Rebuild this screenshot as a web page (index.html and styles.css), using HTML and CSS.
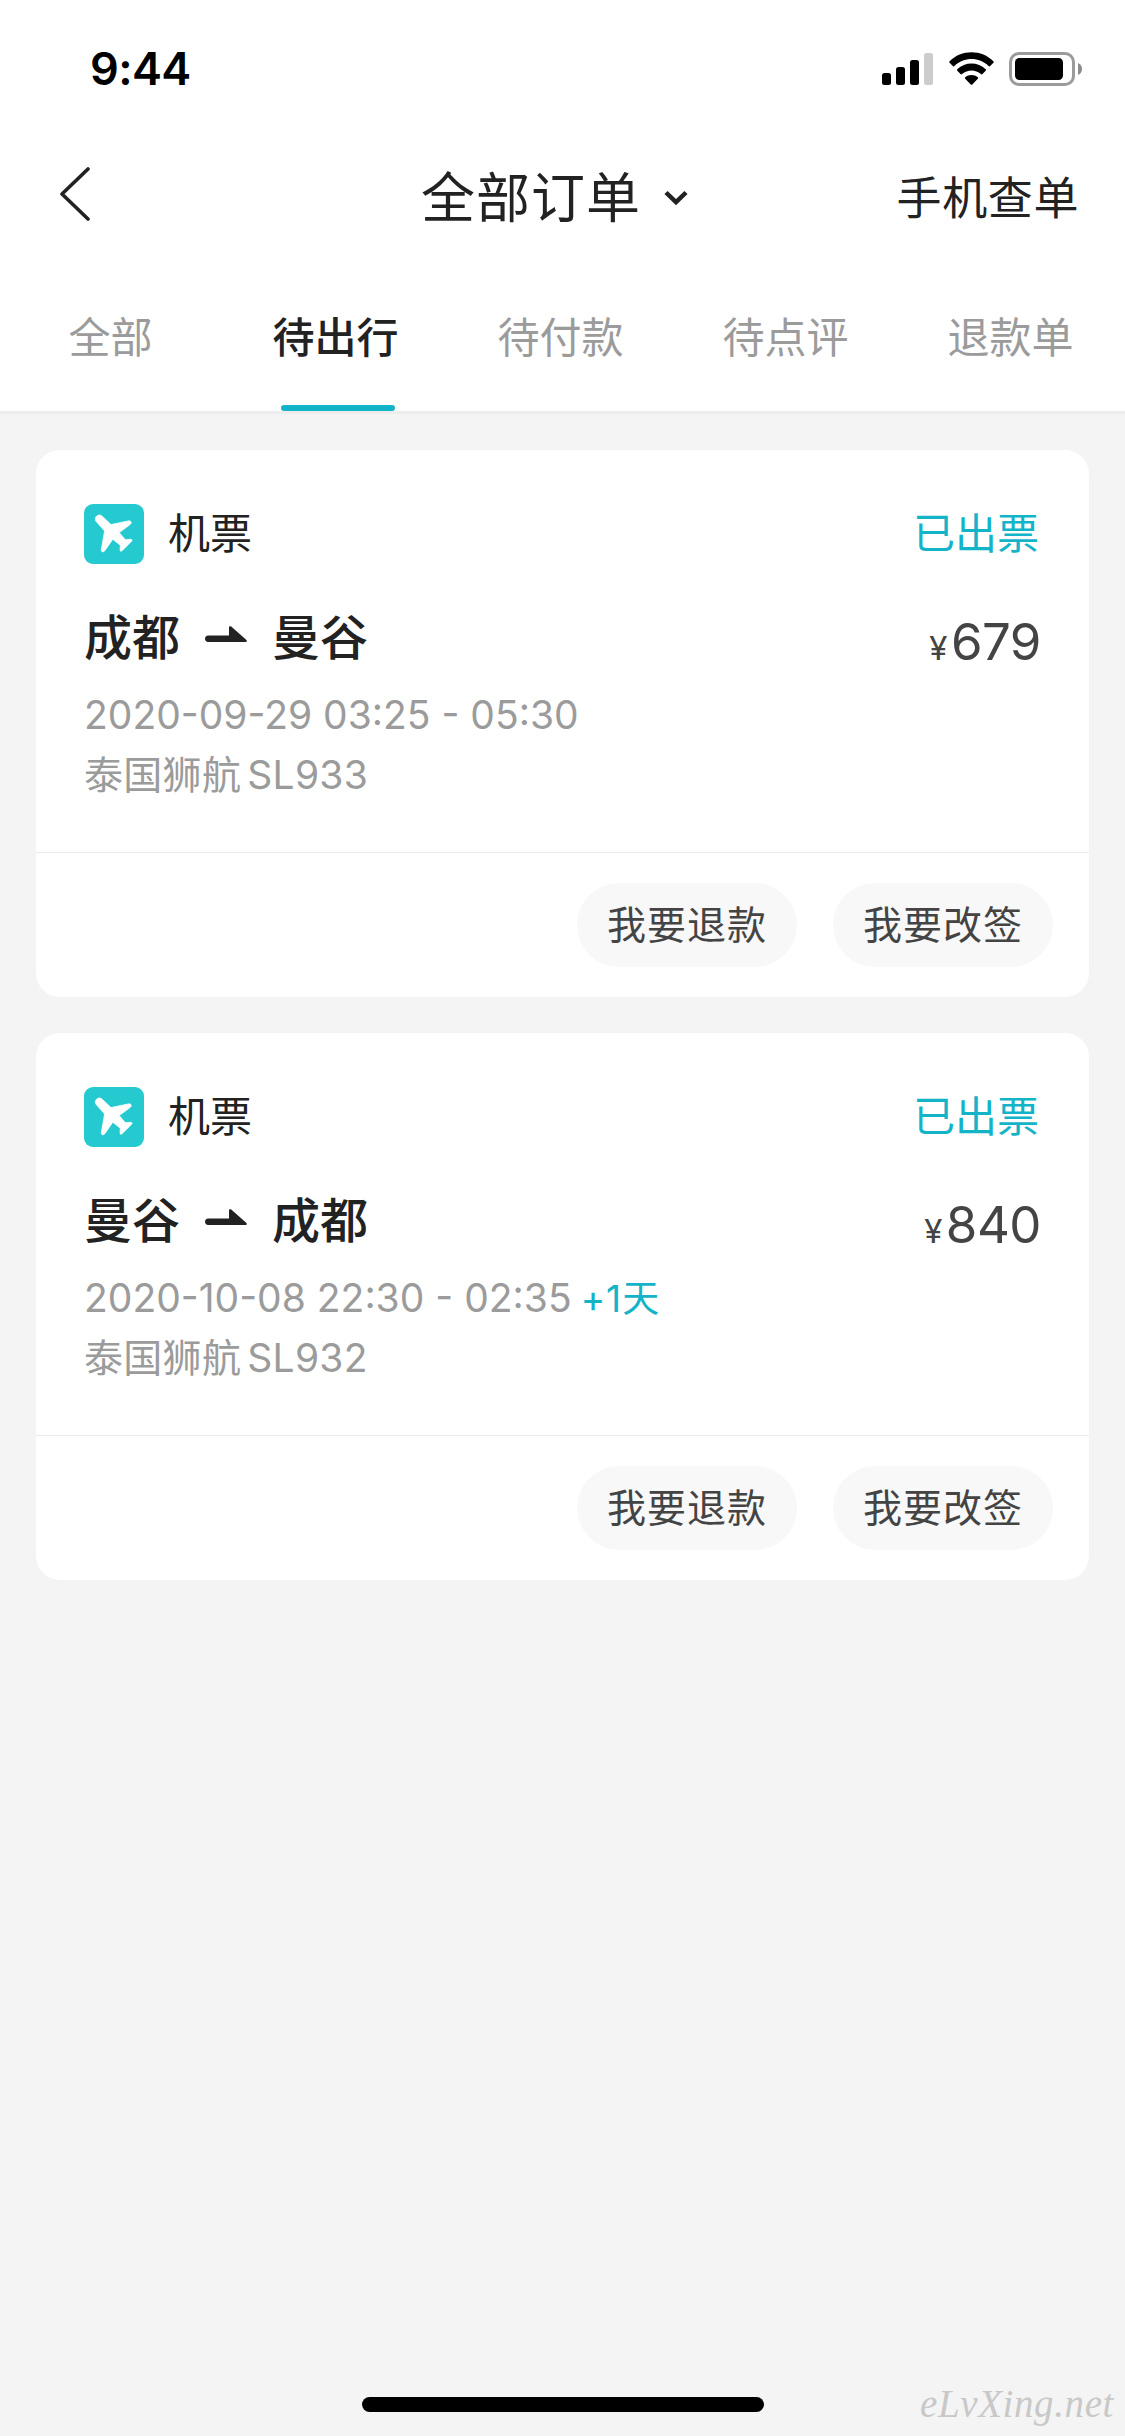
FILE: index.html
```html
<!DOCTYPE html>
<html lang="zh-CN">
<head>
<meta charset="utf-8">
<title>全部订单</title>
<link rel="stylesheet" href="styles.css">
</head>
<body>
<svg class="sprite" aria-hidden="true">
  <symbol id="plane" viewBox="0 0 60 60">
    <rect width="60" height="60" rx="9" fill="#25cad1"/>
    <path fill="#fff" stroke="#fff" stroke-width=".8" stroke-linejoin="round" d="M12.3 17.6C10.8 15.8 11.2 13.2 12.8 12C14.4 10.6 16.900 10.800 18.400 12.400L27 20.600L44.500 16.900C46.500 16.500 48 18.200 46.800 19.800L46 20.600L35.200 28.600L41.300 35.700L46.700 35.300C48 35.200 48.500 36.300 47.600 37.200L38 46.800C37.200 47.600 36 47.200 36.100 46L36.300 41.200L28.800 35.200L20.800 46.700C19.700 48.300 17.400 48 17.200 46.200L20.600 27Z"/>
  </symbol>
  <symbol id="arrow" viewBox="0 0 42 16">
    <path fill="#222" d="M3.200 9.500H24V1.300C24 0 25.300 -.2 26.200 .6L41.200 13.800C42.200 14.800 41.900 16 40.500 16H3.200C1.200 16 0 14.600 0 12.800C0 11 1.200 9.500 3.200 9.500Z"/>
  </symbol>
</svg>

<header class="header">
  <div class="status">
    <span class="time">9:44</span>
    <div class="indicators">
      <svg width="51" height="34" viewBox="0 0 51 34">
        <rect x="0" y="21" width="9" height="12" rx="2.500"/>
        <rect x="14" y="15" width="9" height="18" rx="2.500"/>
        <rect x="28" y="8" width="9" height="25" rx="2.500"/>
        <rect x="42" y="1" width="9" height="32" rx="2.500" fill="#ccc"/>
      </svg>
      <svg width="45" height="34" viewBox="0 0 45 34">
        <path d="M.6 9.300C12 -2.900 33 -2.900 44.400 9.300C44.900 9.800 44.900 10.300 44.400 10.800L41.200 14C40.700 14.500 40.100 14.500 39.600 14C30 4.700 15 4.700 5.400 14C4.900 14.500 4.300 14.500 3.800 14L.6 10.800C.1 10.300 .1 9.800 .6 9.300Z"/>
        <path d="M8.300 17.300C16 9.600 29 9.600 36.700 17.300C37.200 17.800 37.200 18.300 36.700 18.800L33.500 22C33 22.500 32.400 22.500 31.900 22C26.500 17.200 18.500 17.200 13.100 22C12.600 22.500 12 22.500 11.500 22L8.300 18.800C7.800 18.300 7.800 17.800 8.300 17.300Z"/>
        <path d="M16.200 25.300C19.600 22.200 25.400 22.200 28.800 25.300C29.300 25.800 29.300 26.300 28.800 26.800L23.300 32.400C22.800 32.900 22.200 32.900 21.700 32.400L16.200 26.800C15.700 26.300 15.700 25.800 16.200 25.300Z"/>
      </svg>
      <svg width="73" height="34" viewBox="0 0 73 34">
        <rect x="1.500" y="1.500" width="63" height="31" rx="8.500" fill="none" stroke="#9b9b9b" stroke-width="3"/>
        <rect x="6" y="6" width="48" height="22" rx="4.500"/>
        <path d="M69 11C71.500 12 73 14.300 73 17S71.500 22 69 23Z" fill="#8c8c8c"/>
      </svg>
    </div>
  </div>

  <nav class="nav">
    <a class="back">
      <svg width="32" height="54" viewBox="0 0 32 54" fill="none" stroke="#222" stroke-width="3.600" stroke-linecap="round" stroke-linejoin="round"><path d="M29 2L3 27L29 52"/></svg>
    </a>
    <h1 class="title">全部订单
      <svg class="chevron" width="24" height="16" viewBox="0 0 24 16" fill="none" stroke="#222" stroke-width="4.500"><path d="M2 2.500L12 12.200L22 2.500"/></svg>
    </h1>
    <a class="lookup">手机查单</a>
  </nav>

  <div class="tabs">
    <a class="tab">全部</a>
    <a class="tab tab-active">待出行</a>
    <a class="tab">待付款</a>
    <a class="tab">待点评</a>
    <a class="tab">退款单</a>
  </div>
</header>

<main class="orders">
  <article class="card">
    <div class="card-body">
      <div class="card-head">
        <svg class="plane"><use href="#plane"/></svg>
        <span class="kind">机票</span>
        <span class="state">已出票</span>
      </div>
      <div class="trip">
        <h2 class="route">成都<svg class="arrow"><use href="#arrow"/></svg>曼谷</h2>
        <div class="price"><span class="yen">¥</span>679</div>
      </div>
      <p class="line">2020-09-29 03:25 - 05:30</p>
      <p class="line airline">泰国狮航<span class="flight">SL933</span></p>
    </div>
    <div class="actions">
      <button class="action">我要退款</button>
      <button class="action">我要改签</button>
    </div>
  </article>

  <article class="card">
    <div class="card-body">
      <div class="card-head">
        <svg class="plane"><use href="#plane"/></svg>
        <span class="kind">机票</span>
        <span class="state">已出票</span>
      </div>
      <div class="trip">
        <h2 class="route">曼谷<svg class="arrow"><use href="#arrow"/></svg>成都</h2>
        <div class="price"><span class="yen">¥</span>840</div>
      </div>
      <p class="line">2020-10-08 22:30 - 02:35<span class="plus">+1天</span></p>
      <p class="line airline">泰国狮航<span class="flight">SL932</span></p>
    </div>
    <div class="actions">
      <button class="action">我要退款</button>
      <button class="action">我要改签</button>
    </div>
  </article>
</main>

<footer class="footer">
  <div class="home-bar"></div>
  <span class="watermark">eLvXing.net</span>
</footer>
</body>
</html>
```
FILE: styles.css
```css
* {
  box-sizing: border-box;
  margin: 0;
  padding: 0;
}

body {
  display: flex;
  flex-direction: column;
  width: 1125px;
  height: 2436px;
  background: #f4f4f4;
  color: #222;
  font-family: Inter, "Noto Sans CJK SC", sans-serif;
  overflow: hidden;
}

svg {
  display: block;
  flex: none;
}

.sprite {
  position: absolute;
  width: 0;
  height: 0;
}

.header {
  background: #fff;
  border-bottom: 3px solid #ededed;
}

.status {
  display: flex;
  justify-content: space-between;
  height: 132px;
  padding: 39px 43px 0 90px;
}

.time {
  height: 60px;
  color: #000;
  font-size: 45px;
  font-weight: 600;
  letter-spacing: -.6px;
  line-height: 60px;
}

.indicators {
  display: flex;
  align-items: center;
  height: 60px;
  gap: 15.500px;
}

.nav {
  display: grid;
  grid-template-columns: 362px 1fr auto;
  align-items: center;
  height: 132px;
  padding: 0 46px 0 59px;
}

.back {
  padding-bottom: 8px;
}

.title {
  display: flex;
  align-items: center;
  gap: 23px;
  padding-top: 2px;
  font-size: 54px;
  font-weight: 400;
  letter-spacing: 1px;
  line-height: 72px;
}

.chevron {
  margin-bottom: 2px;
}

.lookup {
  padding-top: 2px;
  font-size: 45px;
  letter-spacing: .6px;
  line-height: 60px;
}

.tabs {
  display: grid;
  grid-template-columns: repeat(5, 1fr);
  grid-template-rows: 147px;
}

.tab {
  display: flex;
  justify-content: center;
  padding: 1px 4px 0 0;
  color: #9b9b9b;
  font-size: 42px;
  line-height: 146px;
}

.tab-active {
  position: relative;
  color: #222;
  font-weight: 500;
}

.tab-active::after {
  content: "";
  position: absolute;
  bottom: 0;
  left: 56px;
  width: 114px;
  height: 6px;
  border-radius: 3px;
  background: #14b4c8;
}

.orders {
  display: flex;
  flex-direction: column;
  gap: 36px;
  padding: 36px;
}

.card {
  height: 547px;
  border-radius: 24px;
  background: #fff;
}

.card-body {
  height: 403px;
  padding: 54px 48px 0;
  border-bottom: 1px solid #ebebeb;
}

.card-head {
  display: flex;
  align-items: center;
  height: 60px;
}

.plane {
  width: 60px;
  height: 60px;
}

.kind {
  margin-left: 24px;
  font-size: 42px;
  line-height: 62px;
}

.state {
  margin-right: 2px;
  margin-left: auto;
  color: #14b4c8;
  font-size: 42px;
  line-height: 62px;
}

.trip {
  display: flex;
  justify-content: space-between;
  height: 66px;
  margin: 41px 0 13px;
}

.route {
  display: flex;
  align-items: center;
  font-size: 48px;
  font-weight: 500;
  line-height: 68px;
}

.arrow {
  width: 42px;
  height: 16px;
  margin: 0 25px 8px;
}

.price {
  padding-top: 9px;
  color: #444;
  font-size: 51px;
  letter-spacing: -.5px;
  line-height: 56px;
}

.yen {
  margin-right: 4px;
  font-size: 33px;
}

.line {
  height: 60px;
  color: #9b9b9b;
  font-size: 39px;
  line-height: 61px;
  white-space: nowrap;
}

.airline {
  letter-spacing: .3px;
}

.flight {
  margin-left: 6px;
}

.plus {
  margin-left: 9px;
  color: #14b4c8;
  font-size: 37px;
  letter-spacing: 1px;
}

.actions {
  display: flex;
  justify-content: flex-end;
  gap: 36px;
  padding: 30px 36px;
}

.action {
  width: 220px;
  height: 84px;
  border: 0;
  border-radius: 42px;
  background: #f8f8f8;
  color: #444;
  font-family: inherit;
  font-size: 39px;
  letter-spacing: 1px;
  line-height: 84px;
}

.footer {
  display: grid;
  grid-template-columns: 362px 402px 1fr;
  align-items: center;
  height: 64px;
  margin-top: auto;
}

.home-bar {
  grid-column: 2;
  height: 15px;
  border-radius: 8px;
  background: #000;
}

.watermark {
  justify-self: end;
  padding-right: 11px;
  color: #c8c8c8;
  font-family: "Liberation Serif", cursive;
  font-size: 39px;
  font-style: italic;
  letter-spacing: .6px;
  line-height: 62px;
}
```
